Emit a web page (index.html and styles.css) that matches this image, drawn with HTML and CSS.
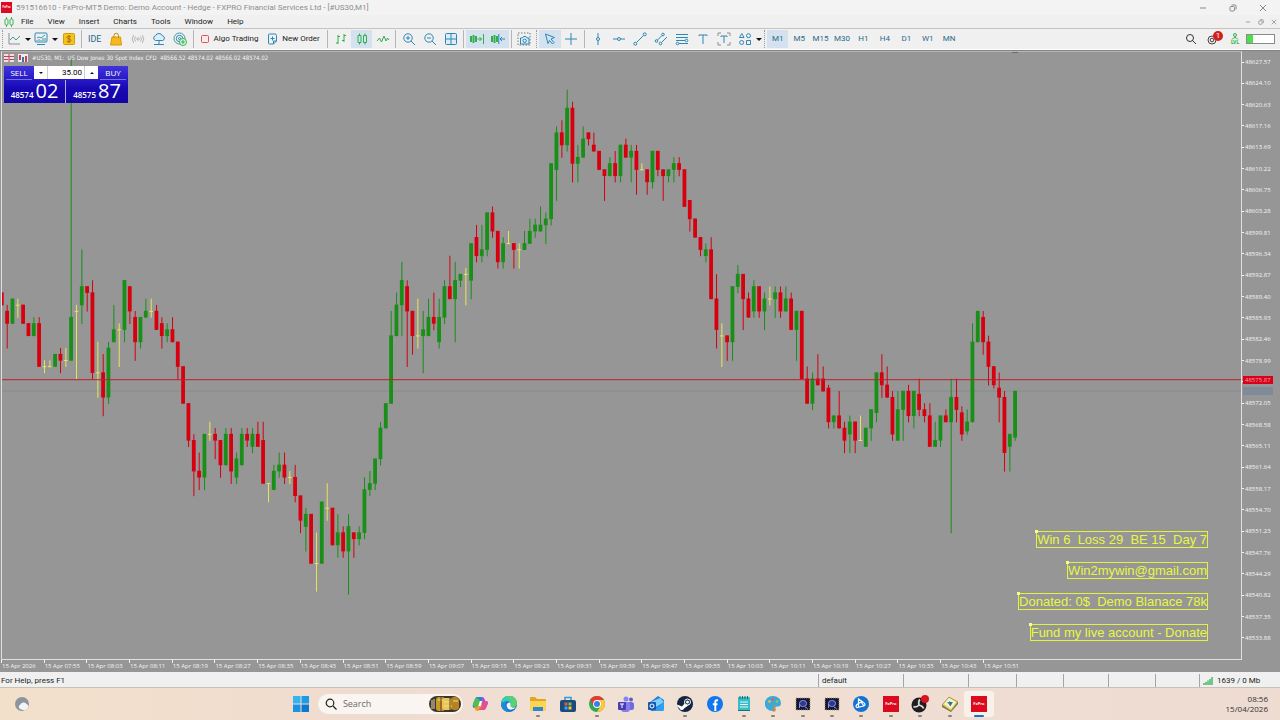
FILE: index.html
```
<!DOCTYPE html>
<html lang="en">
<head>
    <meta charset="UTF-8">
    <meta name="viewport" content="width=device-width, initial-scale=1.0">
    <title>FxPro-MT5 Demo</title>
    <link rel="stylesheet" href="styles.css">
</head>
<body>
    <!-- Title bar -->
    <header class="titlebar">
        <span class="fx-logo">FxPro</span>
        <span class="title">591516610 - FxPro-MT5 Demo: Demo Account - Hedge - FXPRO Financial Services Ltd - [#US30,M1]</span>
        <div class="window-buttons">
            <button aria-label="Minimize"><svg width="8" height="8" viewBox="0 0 8 8"><path d="M1 4h6"/></svg></button>
            <button aria-label="Restore"><svg width="8" height="8" viewBox="0 0 8 8"><rect x="1" y="2.5" width="4.5" height="4.5" rx="1"/><path d="M2.5 1h3.5q1 0 1 1v3.5"/></svg></button>
            <button aria-label="Close"><svg width="8" height="8" viewBox="0 0 8 8"><path d="M1 1l6 6M7 1l-6 6"/></svg></button>
        </div>
    </header>

    <!-- Menu -->
    <nav class="menubar">
        <svg class="menu-logo" width="10" height="10" viewBox="0 0 10 10"><rect x="1" y="2" width="3" height="6" rx="1"/><rect x="6" y="2" width="3" height="6" rx="1"/><path d="M2.5 0v2M2.5 8v2M7.5 0v2M7.5 8v2"/></svg>
        <a href="#">File</a>
        <a href="#">View</a>
        <a href="#">Insert</a>
        <a href="#">Charts</a>
        <a href="#">Tools</a>
        <a href="#">Window</a>
        <a href="#">Help</a>
        <div class="child-buttons">
            <button aria-label="Minimize chart"><svg width="6" height="6" viewBox="0 0 8 8"><path d="M1 4h6"/></svg></button>
            <button aria-label="Restore chart"><svg width="6" height="6" viewBox="0 0 8 8"><rect x="1" y="2.5" width="4.5" height="4.5" rx="1"/><path d="M2.5 1h3.5q1 0 1 1v3.5"/></svg></button>
            <button aria-label="Close chart"><svg width="6" height="6" viewBox="0 0 8 8"><path d="M1 1l6 6M7 1l-6 6"/></svg></button>
        </div>
    </nav>

    <!-- Toolbar -->
    <div class="toolbar">
        <span class="grip"></span>
        <button class="tool wide" aria-label="New chart"><svg width="14" height="14" viewBox="0 0 14 14"><path class="gray" d="M2 1v11h11"/><path class="teal" d="M3 8l3-3 3 3 4-4"/></svg><i class="caret"></i></button>
        <button class="tool wide" aria-label="Profiles"><svg width="14" height="14" viewBox="0 0 14 14"><rect class="blue" x="1" y="1" width="12" height="9" rx="1"/><path class="teal" d="M3 6l2-1 2 1 4-3M3 8v1M5 7v2M7 8v1M9 6v3M11 6v3"/><path class="blue" d="M3 12.500h8"/></svg><i class="caret"></i></button>
        <button class="tool single" aria-label="Market watch"><svg width="14" height="14" viewBox="0 0 14 14"><rect x="1.500" y="1.500" width="11" height="11" rx="1" fill="#f6c21c" stroke="#d39b0a"/><path d="M9 4.800q-2-1.300-3.500-.3t0 1.900l2.500.8q2 1 .4 2.200t-3.600-.3M7 3v8" fill="none" stroke="#8a6200" stroke-width=".8"/></svg></button>
        <span class="sep"></span>
        <div class="tools five">
            <button class="tool ide">IDE</button>
            <button class="tool" aria-label="Market"><svg width="14" height="14" viewBox="0 0 14 14"><path d="M3 5h8.500l1 8h-11z" fill="#f6b81c" stroke="#d89b0a"/><path d="M5 6V3.500a2 2 0 0 1 4.500 0V6" fill="none" stroke="#c08a10"/></svg></button>
            <button class="tool" aria-label="Signals"><svg width="14" height="14" viewBox="0 0 14 14"><g fill="none" stroke="#b5b5b5"><circle cx="7" cy="7" r="1.200"/><path d="M4.500 4.500q-2 2.500 0 5M9.500 4.500q2 2.500 0 5M2.700 3q-3 4 0 8M11.300 3q3 4 0 8"/></g></svg></button>
            <button class="tool" aria-label="VPS"><svg width="14" height="14" viewBox="0 0 14 14"><path class="blue tint" d="M3.500 8.500a2.500 2.500 0 0 1 0-4.800 3.700 3.700 0 0 1 6.800 0 2.500 2.500 0 0 1 .5 4.800z"/><path class="blue" d="M7 8.500v3.500M2 12.500h10"/></svg></button>
            <button class="tool" aria-label="Network"><svg width="14" height="14" viewBox="0 0 14 14"><circle class="teal" cx="6.500" cy="6.500" r="5.500"/><circle class="blue" cx="6.500" cy="6.500" r="3.200"/><circle class="blue" cx="6.500" cy="6.500" r="1"/><circle cx="10" cy="10" r="3.500" fill="#e8f8ea" stroke="#31b44b"/><path class="green" d="M8 10h4M10 8v4"/></svg></button>
        </div>
        <span class="sep"></span>
        <button class="tool label algo"><svg width="10" height="10" viewBox="0 0 10 10"><rect x="1.500" y="1.500" width="7" height="7" rx="1" fill="#fbe9e9" stroke="#d9535a"/></svg>Algo Trading</button>
        <button class="tool label order"><svg width="11" height="12" viewBox="0 0 11 12"><path class="blue" d="M1.500 2q0-1 1-1H8q1.500 0 1.500 1.500V8L6.500 11h-4q-1 0-1-1zM9.500 8h-3v3M5.500 3.500v4M3.500 5.500h4"/></svg>New Order</button>
        <span class="sep"></span>
        <div class="tools three">
            <button class="tool" aria-label="Bar chart"><svg width="14" height="14" viewBox="0 0 14 14"><path class="green" d="M4 3v9M4 4.500h2M2 11h2M10 2v8M8 8.500h2M10 3.500h2"/></svg></button>
            <button class="tool active" aria-label="Candlesticks"><svg width="14" height="14" viewBox="0 0 14 14"><path class="green" d="M3 3.500h3v7H3zM8.500 3.500h3v7h-3zM4.500 1.500v2M4.500 10.500v2M10 1.500v2M10 10.500v2"/></svg></button>
            <button class="tool" aria-label="Line chart"><svg width="14" height="14" viewBox="0 0 14 14"><path class="green" d="M1 9l2.500-3 2 4L8 4l2 5 1.500-3L13 8"/></svg></button>
        </div>
        <span class="sep"></span>
        <div class="tools three">
            <button class="tool" aria-label="Zoom in"><svg width="14" height="14" viewBox="0 0 14 14"><circle class="blue" cx="6" cy="6" r="4.200"/><path class="blue" d="M9 9l4 4M4 6h4M6 4v4"/></svg></button>
            <button class="tool" aria-label="Zoom out"><svg width="14" height="14" viewBox="0 0 14 14"><circle class="blue" cx="6" cy="6" r="4.200"/><path class="blue" d="M9 9l4 4M4 6h4"/></svg></button>
            <button class="tool" aria-label="Tile windows"><svg width="14" height="14" viewBox="0 0 14 14"><path class="blue tint" d="M1.500 2.500q0-1 1-1h9q1 0 1 1v9q0 1-1 1h-9q-1 0-1-1zM7 1.500v11M1.500 7h11"/></svg></button>
        </div>
        <span class="sep"></span>
        <div class="tools two">
            <button class="tool active" aria-label="Auto scroll"><svg width="16" height="14" viewBox="0 0 16 14"><path class="green bold" d="M2 4v6M4.500 3v8M7 4v6"/><path class="green" d="M8.500 7h4M10.500 5l2 2-2 2M14.500 2v10"/></svg></button>
            <button class="tool active" aria-label="Chart shift"><svg width="16" height="14" viewBox="0 0 16 14"><path class="green bold" d="M2 4v6M4.500 3v8M7 4v6"/><path class="blue" d="M10 7h5M12 5l-2 2 2 2M8.800 2v10"/></svg></button>
        </div>
        <span class="sep"></span>
        <button class="tool single" aria-label="Screenshot"><svg width="14" height="14" viewBox="0 0 14 14"><rect x="1" y="1" width="12" height="12" fill="none" stroke="#777" stroke-dasharray="1.500 1.500"/><path class="blue tint" d="M3.500 6h2l1-1.500h2.500l1 1.500h2v6h-8.500z"/><circle class="blue" cx="7.700" cy="8.800" r="1.700"/></svg></button>
        <span class="grip"></span>
        <div class="tools two">
            <button class="tool active" aria-label="Cursor"><svg width="14" height="14" viewBox="0 0 14 14"><path class="blue" d="M2.500 2l9 3.500-3.500 1.500 3 3.500-1.500 1.500-3-3.500-1.500 3z"/></svg></button>
            <button class="tool" aria-label="Crosshair"><svg width="14" height="14" viewBox="0 0 14 14"><path class="blue" d="M7 1v12M1 7h12"/></svg></button>
        </div>
        <span class="sep"></span>
        <div class="tools eight">
            <button class="tool" aria-label="Vertical line"><svg width="14" height="14" viewBox="0 0 14 14"><circle class="blue" cx="7" cy="7" r="1.500"/><path class="blue" d="M7 1v4.500M7 8.500V13"/></svg></button>
            <button class="tool" aria-label="Horizontal line"><svg width="14" height="14" viewBox="0 0 14 14"><circle class="blue" cx="7" cy="7" r="1.500"/><path class="blue" d="M1 7h4.500M8.500 7H13"/></svg></button>
            <button class="tool" aria-label="Trendline"><svg width="14" height="14" viewBox="0 0 14 14"><circle class="blue" cx="2.300" cy="11.700" r="1.500"/><circle class="blue" cx="11.700" cy="2.300" r="1.500"/><path class="blue" d="M3.500 10.500l7-7"/></svg></button>
            <button class="tool" aria-label="Channel"><svg width="14" height="14" viewBox="0 0 14 14"><circle class="blue" cx="2.500" cy="9" r="1.300"/><circle class="blue" cx="9" cy="2.500" r="1.300"/><circle class="blue" cx="6.500" cy="11.500" r="1.300"/><path class="blue" d="M3.500 8l4.500-4.500M7.500 10.500L13 5"/></svg></button>
            <button class="tool" aria-label="Fibonacci"><svg width="14" height="14" viewBox="0 0 14 14"><path class="blue" d="M1 2.500h12M1 5.500h12M1 8.500h9M4 11.500h9"/><circle class="blue panel" cx="11.500" cy="8.500" r="1.300"/><circle class="blue panel" cx="2.500" cy="11.500" r="1.300"/></svg></button>
            <button class="tool" aria-label="Text"><svg width="14" height="14" viewBox="0 0 14 14"><path class="blue" d="M3 4V3h8v1M7 3v9"/></svg></button>
            <button class="tool" aria-label="Text label"><svg width="14" height="14" viewBox="0 0 14 14"><path class="blue" d="M4 5V4h6v1M7 4v7"/><path class="gray" d="M1 4V1h3M10 1h3v3M1 10v3h3M10 13h3v-3"/></svg></button>
            <button class="tool" aria-label="Shapes"><svg width="14" height="14" viewBox="0 0 14 14"><path class="blue" d="M3.800 1.500L6 5.500H1.500zM8.500 8.500h4v4h-4z"/><circle class="blue" cx="10.500" cy="3.700" r="2"/><circle class="blue" cx="3.700" cy="10.500" r="2"/></svg></button>
        </div>
        <i class="caret"></i>
        <span class="grip"></span>
        <div class="tools nine">
            <button class="tool active">M1</button>
            <button class="tool">M5</button>
            <button class="tool">M15</button>
            <button class="tool">M30</button>
            <button class="tool">H1</button>
            <button class="tool">H4</button>
            <button class="tool">D1</button>
            <button class="tool">W1</button>
            <button class="tool">MN</button>
        </div>
        <div class="toolbar-right">
            <button class="tool" aria-label="Search"><svg width="12" height="12" viewBox="0 0 12 12"><g fill="none" stroke="#333"><circle cx="5" cy="5" r="3.500"/><path d="M7.500 7.500L11 11"/></g></svg></button>
            <button class="tool notify" aria-label="Notifications"><svg width="12" height="12" viewBox="0 0 12 12"><g fill="none" stroke="#444"><circle cx="5" cy="7" r="4"/><circle cx="5" cy="7" r="1.800"/></g></svg><span class="badge">1</span></button>
            <span class="level"><svg width="8" height="7" viewBox="0 0 8 7"><circle class="green" cx="4" cy="2" r="1.500"/><path class="green" d="M1 6.500q3-4 6 0"/></svg>LVL</span>
            <span class="battery"></span>
        </div>
    </div>

    <!-- Chart -->
    <main class="chart">
        <div class="plot">
            <svg id="candles" viewBox="2 52 1239 607" preserveAspectRatio="none"></svg>
            <div class="chart-head">
                <svg width="10" height="8" viewBox="0 0 10 8"><rect width="10" height="8" fill="#f3dfe2"/><path d="M0 2.500h10M0 5.500h4M5 0v8" stroke="#c8434e"/><path d="M5 5.500h5" stroke="#3f6fb5"/></svg>
                <svg width="10" height="8" viewBox="0 0 10 8"><rect width="10" height="8" fill="#e9eef5"/><path d="M2 1v5M8 2v6" stroke="#c8434e" stroke-width="2"/><path d="M5 3v5" stroke="#3f6fb5" stroke-width="2"/></svg>
                <span>#US30, M1:&nbsp; US Dow Jones 30 Spot Index CFD&nbsp; 48566.52 48574.02 48566.02 48574.02</span>
            </div>
            <div class="trade">
                <button class="side sell">SELL</button>
                <div class="lots">
                    <button aria-label="Decrease volume"><i class="down"></i></button>
                    <input type="text" value="35.00" aria-label="Volume">
                    <button aria-label="Increase volume"><i class="up"></i></button>
                </div>
                <button class="side buy">BUY</button>
                <div class="quote bid"><small>48574</small><b>02</b></div>
                <div class="quote ask"><small>48575</small><b>87</b></div>
            </div>
            <div class="notes">
                <div class="note">Win 6  Loss 29  BE 15  Day 7</div>
                <div class="note">Win2mywin@gmail.com</div>
                <div class="note">Donated: 0$  Demo Blanace 78k</div>
                <div class="note">Fund my live account - Donate</div>
            </div>
        </div>
        <div class="price-axis">
            <div class="prices" id="prices"></div>
            <span class="price-tag last"></span>
            <span class="price-tag ask-tag">48575.87</span>
        </div>
        <div class="time-axis" id="times"></div>
    </main>

    <!-- Status bar -->
    <footer class="statusbar">
        <span>For Help, press F1</span>
        <span>default</span>
        <span></span>
        <span></span>
        <span></span>
        <span></span>
        <span></span>
        <span></span>
        <span class="traffic"><svg width="10" height="8" viewBox="0 0 10 8"><path d="M1 6v2M3 5v3M5 3.500v4.500M7 2v6M9 0v8" stroke="#3db558" stroke-width="1.400"/></svg>1639 / 0 Mb</span>
    </footer>

    <!-- Taskbar -->
    <div class="taskbar">
        <button class="weather" aria-label="Weather"><svg width="16" height="16" viewBox="0 0 16 16"><circle cx="8" cy="8" r="7" fill="#8d949c"/><path d="M6 13a2.500 2.500 0 0 1 .5-4.500 3.500 3.500 0 0 1 6-.5q2 .5 2 2.500-1 3-4 4z" fill="#f2f5f8"/></svg></button>
        <div class="apps">
            <button class="app" aria-label="Start"><svg width="16" height="16" viewBox="0 0 16 16"><path d="M0 0h7.500v7.500H0z" fill="#35b4f0"/><path d="M8.500 0H16v7.500H8.500z" fill="#1d9be6"/><path d="M0 8.500h7.500V16H0z" fill="#1b93e0"/><path d="M8.500 8.500H16V16H8.500z" fill="#0c78d0"/></svg></button>
            <label class="search">
                <svg width="12" height="12" viewBox="0 0 12 12"><g fill="none" stroke="#222" stroke-width="1.200"><circle cx="5" cy="5" r="3.800"/><path d="M8 8l3.500 3.500"/></g></svg>
                <input type="text" placeholder="Search" aria-label="Search">
                <svg width="32" height="16" viewBox="0 0 32 16"><rect width="32" height="16" rx="8" fill="#3b3430"/><rect x="7" y="1" width="9" height="14" rx="3" fill="#c89a2c"/><rect x="13" y="2" width="10" height="12" rx="3" fill="#e9c65a"/><rect x="22" y="1" width="8" height="13" rx="3" fill="#b58420"/><path d="M3 4v9M5 3v10M15 6h7M15 10h8M24 5h5M9 4h5" stroke="#f4dd8a"/><path d="M12 1v14M21 2v12" stroke="#604513"/></svg>
            </label>
            <button class="app" aria-label="Copilot"><svg width="16" height="16" viewBox="0 0 16 16"><path d="M5 1h5l2 4H7L4 12H2Q0 11 1 8l2-5q.7-2 2-2z" fill="#2583e0"/><path d="M10 1q2 0 2.500 2l.8 2H15q1.500 1 .7 3L14 12q-.6 2-2.500 2l-2-4z" fill="#b14bd4"/><path d="M1 8q0 3 2 3h3l2-6-2-3-3 1z" fill="#4fc04e"/><path d="M11 5l-3 8q-1 2-3 2-1.500 0-2-2l-.5-2H6l2-4z" fill="#f59b2e"/><path d="M9.500 10l3.500-5h2q1 1 .5 3L14 12q-1 2-3 2H5q2 0 3-2z" fill="#e4528b"/><path d="M8 5h2L8.500 10h-2z" fill="#fff"/></svg></button>
            <button class="app" aria-label="Edge"><svg width="16" height="16" viewBox="0 0 16 16"><circle cx="8" cy="8" r="8" fill="#1570c4"/><path d="M0 8a8 8 0 0 1 16-1q0 4-4.500 4-2.500 0-2-1.500Q10 8 9 6.500 7 4.500 4 5.500 1 6.500 0 8z" fill="#39c9b4"/><path d="M8 0a8 8 0 0 1 8 7q0 4-4.500 4-2.500 0-2-1.500 3-5-4-9z" fill="#5bd36a"/><path d="M5.500 9q.5-3 3.500-2.500 1 1.500.5 3 0 2 3.500 2 1 0 2-.7-2 3-5 3-4 0-4.500-4.800z" fill="#e9f3f8"/><path d="M0 8q2-3 6-2-3 3 0 7 1 2 4 2.700A8 8 0 0 1 0 8z" fill="#1d8bd8"/></svg></button>
            <button class="app open" aria-label="File Explorer"><svg width="16" height="16" viewBox="0 0 16 16"><path d="M0 2q0-1 1-1h4l2 2h8q1 0 1 1v10H0z" fill="#e2a421"/><path d="M0 5h16v9q0 1-1 1H1q-1 0-1-1z" fill="#fbd453"/><path d="M3 11h10v4H3z" fill="#2b86d6"/></svg></button>
            <button class="app" aria-label="Store"><svg width="16" height="16" viewBox="0 0 16 16"><path d="M5 4V1.500h6V4" fill="none" stroke="#2a9be0" stroke-width="1.500"/><rect y="4" width="16" height="12" rx="2" fill="#1d4a7c"/><path d="M4.500 6.500h3v3h-3z" fill="#f0553a"/><path d="M8.500 6.500h3v3h-3z" fill="#7fc241"/><path d="M4.500 10.500h3v3h-3z" fill="#31a8ea"/><path d="M8.500 10.500h3v3h-3z" fill="#fbc02d"/></svg></button>
            <button class="app open" aria-label="Chrome"><svg width="16" height="16" viewBox="0 0 16 16"><circle cx="8" cy="8" r="8" fill="#2da94f"/><path d="M1.100 4a8 8 0 0 1 13.800 0H8L4.500 10z" fill="#e33b2e"/><path d="M14.900 4A8 8 0 0 1 8 16l3.500-6L8 4z" fill="#fcc934"/><circle cx="8" cy="8" r="3.900" fill="#fff"/><circle cx="8" cy="8" r="3" fill="#3b7ded"/></svg></button>
            <button class="app" aria-label="Teams"><svg width="16" height="16" viewBox="0 0 16 16"><circle cx="8" cy="3" r="2.500" fill="#7f85f5"/><circle cx="13" cy="3.500" r="2" fill="#5b5fc7"/><rect x="9" y="6" width="7" height="8" rx="2.500" fill="#6a6fdc"/><rect x="3" y="6" width="9" height="10" rx="3" fill="#8b7bea"/><rect y="6" width="8" height="8" rx="1" fill="#4b3bb5"/><path d="M2 8h4M4 8v4" stroke="#fff"/></svg></button>
            <button class="app" aria-label="Outlook"><svg width="16" height="16" viewBox="0 0 16 16"><path d="M1 7L10 0l6 4v9q0 2-2 2H3z" fill="#1f7fe0"/><path d="M3 6l9-4 4 4-8 5z" fill="#7fd0fa"/><path d="M16 6v7q0 2-2 2H5z" fill="#2fa0f0"/><rect y="6" width="8" height="8" rx="1" fill="#1558b0"/><circle cx="4" cy="10" r="2" fill="none" stroke="#fff"/></svg></button>
            <button class="app open" aria-label="Steam"><svg width="16" height="16" viewBox="0 0 16 16"><circle cx="8" cy="8" r="8" fill="#12263f"/><path d="M0 8.500l5 2 3-3.500 4.500 1.500L7 12.500a2.500 2.500 0 0 1-4.800-.7L.5 11z" fill="#fff"/><circle cx="10.500" cy="6" r="3" fill="#12263f" stroke="#fff"/><circle cx="10.500" cy="6" r="1.500" fill="#fff"/></svg></button>
            <button class="app" aria-label="Facebook"><svg width="16" height="16" viewBox="0 0 16 16"><circle cx="8" cy="8" r="8" fill="#1277ee"/><path d="M11 4.200H9.800q-1.500 0-1.500 1.600V15M5.800 8.300h4.700" fill="none" stroke="#fff" stroke-width="1.900"/></svg></button>
            <button class="app open" aria-label="Notepad"><svg width="16" height="16" viewBox="0 0 16 16"><rect x="2" y="1" width="12" height="14" rx="1" fill="#35bcc4"/><path d="M4 0v3M6.500 0v3M9 0v3M11.500 0v3" stroke="#13727f"/><path d="M4 6h8M4 8.500h8M4 11h8" stroke="#eafafa"/><path d="M2 14.500h12" stroke="#13727f"/></svg></button>
            <button class="app open" aria-label="Paint"><svg width="16" height="16" viewBox="0 0 16 16"><path d="M8 0a8 7 0 0 1 8 7q0 4-4 3.500-2 0-2 2T7.500 15A8 7.500 0 0 1 8 0z" fill="#3da9d8"/><circle cx="4.500" cy="5.500" r="1.300" fill="#fbc02d"/><circle cx="8" cy="3.500" r="1.300" fill="#f05a3c"/><circle cx="12" cy="5.500" r="1.300" fill="#83d05a"/><path d="M9 8l2 6q-1 2-3 2z" fill="#d98a3a"/></svg></button>
            <button class="app open" aria-label="Chip tool"><svg width="16" height="16" viewBox="0 0 16 16"><rect x="1" y="2" width="14" height="12" fill="#15173a"/><rect x="1" y="2" width="14" height="12" fill="none" stroke="#a89a5c" stroke-dasharray="1 1"/><rect x="4.500" y="4.500" width="7" height="6" rx="3" fill="#31368c" stroke="#8f97e0"/><path d="M4.500 8v4M10 11l2.500 1.500" fill="none" stroke="#8f97e0"/></svg></button>
            <button class="app open" aria-label="Chip tool 2"><svg width="16" height="16" viewBox="0 0 16 16"><rect x="1" y="2" width="14" height="12" fill="#15173a"/><rect x="1" y="2" width="14" height="12" fill="none" stroke="#a89a5c" stroke-dasharray="1 1"/><rect x="4.500" y="4.500" width="7" height="6" rx="3" fill="#31368c" stroke="#8f97e0"/><path d="M4.500 8v4M10 11l2.500 1.500" fill="none" stroke="#8f97e0"/></svg></button>
            <button class="app open" aria-label="Media"><svg width="16" height="16" viewBox="0 0 16 16"><circle cx="8" cy="8" r="8" fill="#1473d2"/><path d="M5.500 12V3l5 3.500q3 2 0 3.500L4 11.500q-2-1 0-3l4-2.500 3 4" fill="none" stroke="#fff" stroke-width="1.200"/></svg></button>
            <button class="app open" aria-label="FxPro"><span class="fx-logo big">FxPro</span></button>
            <button class="app open" aria-label="OBS"><svg class="obs" width="18" height="18" viewBox="0 0 18 18"><circle cx="8" cy="10" r="7.500" fill="#1f1d20"/><path d="M8 10q-1-4 1-5.500M8 10q4 1 4.500 3.500M8 10q-3 3-5.500 1.500" fill="none" stroke="#d9d9d9" stroke-width="1.700"/><circle cx="14" cy="4" r="4" fill="#d8141f"/></svg></button>
            <button class="app open" aria-label="Editor"><svg width="16" height="16" viewBox="0 0 16 16"><path d="M0 9L7 1l9 5-7 9z" fill="#e6cf52" stroke="#80702a" stroke-width=".6"/><path d="M2 8l5-6 7 4-5 7z" fill="#f4f1dd"/><path d="M5 6l6 0-2.500 4.500z" fill="#3a9b57"/><path d="M7 5l3 2-2 2z" fill="#2b64b5"/><path d="M0 9l9 6 7-9v2l-7 8-9-5z" fill="#77724f"/></svg></button>
            <button class="app open current" aria-label="FxPro terminal"><span class="fx-logo big">FxPro</span></button>
        </div>
        <div class="clock"><span>08:56</span><span>15/04/2026</span></div>
    </div>

    <script src="chart.js"></script>
</body>
</html>
```
FILE: styles.css
```
* {
    box-sizing: border-box;
}

body {
    margin: 0;
    min-height: 100vh;
    display: flex;
    flex-direction: column;
    font-family: 'Open Sans', 'Segoe UI', sans-serif;
    font-size: 8px;
    line-height: 10px;
    color: #1c1c1c;
    background-color: #f0f0f0;
    overflow: hidden;
}

button {
    padding: 0;
    border: none;
    background: none;
    font: inherit;
    color: inherit;
}

input {
    padding: 0;
    border: none;
    background: none;
    font: inherit;
    min-width: 0;
}

a {
    color: inherit;
    text-decoration: none;
}

svg {
    flex: none;
}

.titlebar,
.menubar,
.toolbar,
.statusbar {
    font-family: Roboto, 'Segoe UI', sans-serif;
}

/* Title bar */
.titlebar {
    display: flex;
    align-items: center;
    height: 15px;
    padding-left: 1px;
    background-color: #f3f3f3;
    color: #8e8e8e;
}

.fx-logo {
    width: 11px;
    height: 11px;
    background-color: #dc0a1e;
    color: #fff;
    font-size: 3px;
    font-weight: bold;
    line-height: 11px;
    text-align: center;
}

.fx-logo.big {
    width: 16px;
    height: 16px;
    font-size: 4px;
    line-height: 16px;
}

.title {
    margin-left: 4px;
    white-space: nowrap;
}

.window-buttons,
.child-buttons {
    display: flex;
    margin-left: auto;
}

.window-buttons button {
    display: flex;
    justify-content: center;
    width: 30px;
}

.window-buttons {
    padding-right: 2px;
}

.window-buttons svg,
.child-buttons svg {
    fill: none;
    stroke: #8a8a8a;
}

/* Menu */
.menubar {
    display: flex;
    align-items: center;
    gap: 14px;
    height: 14px;
    padding-left: 4px;
    border-bottom: 1px solid #c4c4c4;
}

.menu-logo {
    margin-right: -7px;
    fill: none;
    stroke: #45b35a;
}

.child-buttons button {
    display: flex;
    justify-content: center;
    width: 13px;
}

/* Toolbar */
.toolbar {
    display: flex;
    align-items: center;
    height: 21px;
    border-bottom: 1px solid #fff;
}

.grip {
    flex: none;
    width: 1px;
    height: 18px;
    margin: 0 2px;
    border-left: 1px dotted #999;
}

.sep {
    flex: none;
    width: 1px;
    height: 18px;
    margin: 0 2px;
    background-color: #b5b5b5;
}

.tools {
    display: flex;
    flex: none;
}

.tools .tool {
    flex: 1;
}

.two { width: 43px; }
.three { width: 63px; }
.five { width: 107px; }
.eight { width: 169px; }
.nine { width: 193px; }

.tool {
    display: flex;
    align-items: center;
    justify-content: center;
    height: 18px;
    color: #2a6a8c;
}

.tool.active {
    background-color: #d3e2ee;
}

.tool.wide {
    width: 27px;
    gap: 4px;
}

.tool.single {
    width: 20px;
}

.tool.ide {
    font-size: 9px;
}

.tool.label {
    gap: 4px;
    color: #1c1c1c;
}

.algo {
    width: 66px;
}

.order {
    width: 63px;
}

.caret {
    flex: none;
    border: 3px solid transparent;
    border-top-color: #111;
    border-bottom: none;
}

.blue,
.teal,
.green,
.gray {
    fill: none;
    stroke: #2e86b5;
}

.teal { stroke: #3a9aa0; }
.green { stroke: #2fb04a; }
.gray { stroke: #8d8d8d; }
.bold { stroke-width: 2; }
.tint { fill: #dceefa; }
.panel { fill: #f0f0f0; }

.toolbar-right {
    display: flex;
    align-items: center;
    margin-left: auto;
    padding-right: 5px;
}

.toolbar-right .tool {
    width: 22px;
}

.notify {
    position: relative;
}

.badge {
    position: absolute;
    top: 1px;
    right: 1px;
    width: 10px;
    height: 10px;
    border-radius: 5px;
    background-color: #d41f1f;
    color: #fff;
    text-align: center;
}

.level {
    display: flex;
    flex-direction: column;
    align-items: center;
    width: 22px;
    font-size: 5px;
    font-weight: bold;
    line-height: 5px;
    color: #2fb04a;
}

.battery {
    width: 29px;
    height: 10px;
    border: 1px solid #8a8a8a;
    background: linear-gradient(90deg, #4be04b 6px, #fff 6px);
}

/* Chart */
.chart {
    flex: 1;
    display: grid;
    grid-template-columns: 1fr 38px;
    grid-template-rows: 1fr 12px;
    padding-left: 1px;
    border-top: 1px solid #848484;
    background-color: #969696;
    color: #f4f4f4;
    font-size: 6px;
    line-height: 8px;
}

.plot {
    position: relative;
    border: 1px solid #e0e0e0;
    border-top-color: #b4b4b4;
}

#candles {
    position: absolute;
    width: 100%;
    height: 100%;
}

.up-candle { fill: #189018; }
.down-candle { fill: #d6000f; }
.doji { fill: #e6e65a; }
.ask-line { fill: #c01f30; }
.bid-line { fill: #868c90; }
.shift-mark { fill: #6c6c6c; }

.chart-head {
    position: relative;
    display: flex;
    align-items: center;
    gap: 4px;
    padding: 2px 2px 0;
    font-family: 'DejaVu Sans Condensed', 'Open Sans', sans-serif;
}

.trade {
    position: relative;
    display: grid;
    grid-template-columns: 30px 32px 32px 30px;
    grid-template-rows: 14px 23px;
    width: 124px;
    margin: 4px 0 0 2px;
    background: linear-gradient(#4034dc, #1809b4 60%, #1405a4);
    font-size: 8px;
    color: #fff;
}

.side {
    border-bottom: 1px solid #7770e4;
    margin: 0 2px;
}

.sell { grid-column: 1; }
.buy { grid-column: 4; }

.lots {
    grid-column: 2 / 4;
    display: grid;
    grid-template-columns: 13px 1fr 13px;
    margin-bottom: 1px;
    background-color: #fff;
    color: #222;
}

.lots button {
    display: flex;
    align-items: center;
    justify-content: center;
}

.lots input {
    width: 100%;
    padding-right: 2px;
    border: 1px solid #ccc;
    border-width: 0 1px;
    font-family: Roboto, sans-serif;
    text-align: right;
}

.down,
.up {
    border: 2px solid transparent;
}

.down {
    border-top-color: #111;
    border-bottom: none;
}

.up {
    border-bottom-color: #111;
    border-top: none;
}

.quote {
    display: flex;
    align-items: baseline;
    justify-content: center;
    gap: 2px;
    line-height: 22px;
}

.bid {
    grid-column: 1 / 3;
    border-right: 1px solid #b4b0e8;
}

.ask {
    grid-column: 3 / 5;
}

.quote small {
    font-size: 8px;
    font-weight: 600;
}

.quote b {
    font-size: 20px;
    font-weight: 400;
}

.notes {
    position: absolute;
    right: 33px;
    bottom: 18px;
    display: flex;
    flex-direction: column;
    align-items: flex-end;
    gap: 14px;
}

.note {
    position: relative;
    border: 1px solid #e3f23c;
    color: #e9f73f;
    font-family: 'Liberation Sans', Arial, sans-serif;
    font-size: 13px;
    line-height: 15px;
    white-space: pre;
}

/* anchor point of the text object */
.note::before {
    content: '';
    position: absolute;
    top: -2px;
    left: -2px;
    width: 3px;
    height: 3px;
    background-color: #f4ff8a;
}

.price-axis {
    position: relative;
    display: grid;
}

.prices {
    display: flex;
    flex-direction: column;
    justify-content: space-between;
    padding: 7px 0 18px;
}

.prices span {
    display: flex;
    align-items: center;
    gap: 1px;
}

.prices span::before {
    content: '';
    width: 2px;
    height: 1px;
    background-color: #f4f4f4;
}

.price-tag {
    position: absolute;
    left: 1px;
    top: 325px;
    width: 30px;
    height: 8px;
    padding-left: 2px;
}

.ask-tag {
    background-color: #d8001a;
    color: #f0a0a0;
}

.last {
    top: 336px;
    background-color: #7f8c98;
}

.time-axis {
    display: grid;
    grid-template-columns: repeat(29, 1fr);
    padding-right: 3px;
    white-space: nowrap;
}

.time-axis span {
    width: 0;
    height: 3px;
    border-left: 1px solid #f4f4f4;
    line-height: 13px;
}

/* Status bar */
.statusbar {
    display: grid;
    grid-template-columns: 1fr 85px 65px 48px 47px 45px 47px 44px 81px;
    height: 16px;
    padding: 2px 0;
    border-bottom: 1px solid #c9c0b8;
    background-color: #f0f0f0;
}

.statusbar span {
    padding-left: 3px;
    border-left: 1px solid #a5a5a5;
    line-height: 13px;
}

.statusbar span:first-child {
    padding-left: 1px;
    border-left: none;
}

.statusbar .traffic {
    display: flex;
    align-items: center;
    gap: 4px;
}

/* Taskbar */
.taskbar {
    display: grid;
    grid-template-columns: 1fr 707px 1fr;
    align-items: center;
    height: 32px;
    background: linear-gradient(90deg, #f3e0cb, #efdcd0 30%, #f1e0d4 45%, #eedbd2);
}

.weather {
    display: flex;
    padding-left: 14px;
}

.apps {
    display: flex;
    align-items: center;
}

.app {
    position: relative;
    flex: 1;
    display: flex;
    align-items: center;
    justify-content: center;
    height: 26px;
    border-radius: 3px;
}

.app.open::after {
    content: '';
    position: absolute;
    bottom: 0;
    width: 4px;
    height: 2px;
    border-radius: 1px;
    background-color: #8b8079;
}

.app.current {
    background-color: #faf0ea;
}

.app.current::after {
    width: 10px;
    background-color: #1473c8;
}

.search {
    display: flex;
    align-items: center;
    gap: 6px;
    width: 145px;
    height: 20px;
    margin: 0 2px;
    padding: 0 2px 0 7px;
    border-radius: 10px;
    background-color: #faf5f0;
}

.search input {
    flex: 1;
    font-size: 9px;
    color: #555;
}

.search input::placeholder {
    color: #6b6b6b;
    opacity: 1;
}

.clock {
    display: flex;
    flex-direction: column;
    align-items: flex-end;
    padding-right: 12px;
    color: #333;
}
```
FILE: chart.js
```
// [high, open, close, low] in points from 48574.02, one entry per minute
const bars = [
    [16,16,14,14], [14,13,11,7], [15,11,15,11], [15,14,14,12], [14,14,11,11], [11,11,9,9], [12,9,11,9], [12,11,4,4],
    [5,4,4,3], [5,4,4,4], [6,4,6,4], [7,6,5,3], [7,5,5,4], [54,5,12,5], [14,13,13,2], [23,14,17,11],
    [17,17,16,13], [18,16,3,2], [8,3,3,-1], [6,3,-1,-4], [8,-1,7,-2], [14,8,10,8], [11,10,10,4], [18,10,18,8],
    [17,17,13,11], [13,12,8,5], [12,8,12,7], [15,12,13,12], [15,13,13,12], [14,13,10,10], [12,11,9,7], [11,9,10,8],
    [12,10,8,8], [8,8,4,2], [4,4,-2,-2], [-2,-2,-8,-9], [-7,-8,-13,-17], [-10,-13,-14,-16], [-7,-14,-7,-16], [-5,-7,-7,-8],
    [-6,-7,-8,-11], [-8,-8,-12,-14], [-6,-12,-7,-12], [-6,-7,-13,-15], [-10,-14,-11,-15], [-6,-12,-7,-12], [-6,-7,-8,-9], [-6,-9,-7,-10],
    [-5,-7,-9,-9], [-5,-8,-15,-15], [-15,-15,-15,-18], [-12,-16,-13,-16], [-10,-13,-12,-14], [-10,-12,-14,-15], [-13,-14,-14,-15], [-12,-14,-17,-18],
    [-17,-17,-21,-23], [-19,-22,-20,-26], [-20,-20,-28,-28], [-23,-28,-28,-32.5], [-18,-28,-18,-28], [-15,-19,-19,-21], [-19,-19,-25,-25], [-20,-25,-23,-27],
    [-22,-23,-26,-27], [-20,-26,-22,-33], [-23,-23,-24,-27], [-22,-24,-23,-25], [-14,-23,-16,-24], [-13,-16,-15,-17], [-11,-15,-11,-16], [-5,-11,-6,-12],
    [-2,-6,-2,-6], [13,-2,9,-2], [16,9,14,9], [21,14,18,9], [18,17,13,4], [13,13,9,6], [15,9,9,7], [13,9,10,3],
    [15,9,12,9], [16,12,11,10], [15,8,12,7], [18,12,17,11], [22,17,15,15], [21,15,18,8], [19,18,19,17], [20,19,19,14],
    [24,18,24,15], [27,25,22,21], [27,22,23,21], [29,23,29,22], [30,29,26,25], [26,26,21,20], [25,21,24,20], [26,24,24,24],
    [24,24,23,20], [24,23,23,20], [26,23,24,23], [28,24,26,24], [28,26,27,25], [30,26,27,26], [29,27,28,24], [37,28,37,27],
    [43,36,42,31], [44,42,40,38], [49,40,46,39], [47,46,37,34], [40,37,38,34], [43,38,41,38], [42,42,41,40], [42,40,39,39],
    [39,39,36,36], [36,36,35,31], [38,35,37,35], [39,37,35,34], [40,35,40,34], [41,40,38,38], [40,38,39,34], [40,39,36,32],
    [37,36,36,36], [36,36,34,32], [39,34,39,33], [39,39,36,35], [36,36,35,31], [36,35,36,34], [38,36,37,34], [38,37,36,35],
    [36,36,30,30], [31,31,28,26], [28,28,25,25], [25,25,23,22], [24,22,23,21], [25,23,15,15], [19,15,10,7], [11,9,9,4],
    [9,9,8,5], [17,8,17,5], [20.5,17,19,16], [19,19,15,10], [16,15,12,12], [18,13,17,12], [17,17,13,12], [16,13,15,10],
    [17,15,15,14], [17,15,16,12], [17,16,13,12], [17,13,15,13], [16,15,10,10], [13,10,13,5], [13,13,2,2], [4,2,-2,-2],
    [3,-2,2,-3], [6,2,1,1], [4,2,0,0], [1,0.5,-5,-6], [-4,-5,-4,-6], [0,-4,-6,-6], [-5,-6,-8,-10], [-4,-7,-5,-10],
    [-5,-5,-8,-10], [-4,-8,-8,-8], [-6,-9,-6,-9], [-3,-6,-3,-8], [3,-3.5,3,-5], [6,3,1,-1], [4,1,-1,-1], [0,-1,-7,-8],
    [0,-8,-3,-8], [0,-3,0,-8], [1,0,-4,-5], [0,-4,0,-6], [2,-0.5,-3,-4], [-2,-3,-4,-5], [-2,-4,-9,-9], [-5,-9,-8,-9],
    [-4,-8,-4,-9], [-3,-4,-5,-5], [2,-5,-1,-23], [2,-1,-3,-5], [-2.5,-3.5,-7,-8], [-3,-6.5,-5,-7], [11,-5,8,-5], [13,8,13,8],
    [13,12,8,6], [9,8,4,1], [4,4,1,0.5], [3,0.5,-1,-5], [0,-1,-10,-13], [-7,-9,-7,-13], [0,-7.5,0,-8]
];

const svg = document.getElementById('candles');
const yOf = points => 391 - points * 6.153;

function rect(x, y, width, height, cls) {
    const el = document.createElementNS('http://www.w3.org/2000/svg', 'rect');
    el.setAttribute('x', x);
    el.setAttribute('y', y);
    el.setAttribute('width', width);
    el.setAttribute('height', height);
    el.setAttribute('class', cls);
    svg.appendChild(el);
}

rect(2, 390.500, 1239, 1, 'bid-line');
rect(1012, 52, 6, 1, 'shift-mark');

bars.forEach(([high, open, close, low], i) => {
    const x = 7 + (i - 1) * 16 / 3;
    const cls = close > open ? 'up-candle' : close < open ? 'down-candle' : 'doji';
    const top = yOf(Math.max(open, close));
    const bottom = yOf(Math.min(open, close));
    rect(x - 0.3, yOf(high), 1, yOf(low) - yOf(high) + 0.6, cls);
    rect(x - 1.8, top - 0.2, 3.8, Math.max(bottom - top + 0.6, 1), cls);
});

rect(2, 379.200, 1239, 1, 'ask-line');

// price scale
const prices = document.getElementById('prices');
for (let i = 0; i < 28; i++) {
    const span = document.createElement('span');
    span.textContent = (48627.57 - i * 3.47).toFixed(2);
    prices.appendChild(span);
}

// time scale, one label every 8 minutes
const times = document.getElementById('times');
for (let i = 0; i < 24; i++) {
    const minutes = 7 * 60 + 47 + i * 8;
    const hh = String(Math.floor(minutes / 60)).padStart(2, '0');
    const mm = String(minutes % 60).padStart(2, '0');
    const span = document.createElement('span');
    span.textContent = i === 0 ? '15 Apr 2026' : `15 Apr ${hh}:${mm}`;
    times.appendChild(span);
}
```
